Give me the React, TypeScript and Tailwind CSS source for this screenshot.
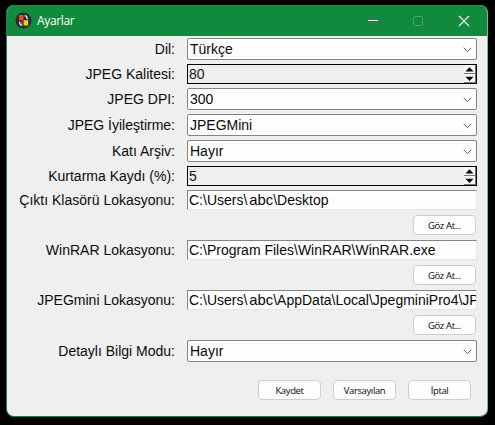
import type { ReactNode } from 'react';

const arial = "font-['Liberation_Sans',Arial,sans-serif] text-[14px] leading-none";

function Row({ label, height, children }: { label: string; height: string; children: ReactNode }) {
  return (
    <div className={`flex shrink-0 items-center ${height}`}>
      <label className={`w-[168px] shrink-0 text-right whitespace-nowrap text-[#0c0c0c] ${arial}`}>{label}</label>
      <div className="ml-3 h-full w-[290px]">{children}</div>
    </div>
  );
}

function Select({ label, value }: { label: string; value: string }) {
  return (
    <Row label={label} height="h-[22px]">
      <div className="flex h-full items-center justify-between rounded-[2px] border border-[#858585] bg-[#fefefe] pr-[4px] pl-[2px]">
        <span className={`text-[#080808] ${arial}`}>{value}</span>
        <svg className="mt-[2px]" width="9" height="6" viewBox="0 0 9 6" fill="none" stroke="#5c5c5c">
          <path d="M.7 .8 4.5 4.6 8.3 .8" />
        </svg>
      </div>
    </Row>
  );
}

function Spin({ label, value }: { label: string; value: string }) {
  return (
    <Row label={label} height="h-5">
      <div className="flex h-full items-center justify-between border border-black bg-[#efefef] pl-px">
        <span className={`text-[#151515] ${arial}`}>{value}</span>
        <svg width="12" height="18" viewBox="0 0 12 18">
          <path d="M0 0h11v8H0zM0 9h11v9H0z" fill="#f5f5f5" />
          <path d="M0 8.5h11M0 17.5h11M11.5 0v18" stroke="#777" fill="none" />
          <path d="M1.5 6.4h8L5.5 2.2zM1.5 11.8h8l-4 4.2z" fill="#050505" />
        </svg>
      </div>
    </Row>
  );
}

function Button({ children }: { children: string }) {
  return (
    <button className="flex h-5 w-[63px] shrink-0 items-center justify-center rounded-[4px] border border-[#cecece] bg-[#fdfdfd] pt-[2px] font-['Open_Sans','Noto_Sans',sans-serif] text-[9.5px] leading-none tracking-[-0.38px] text-[#080808]">
      {children}
    </button>
  );
}

function UserName() {
  return <span className="ml-[2px] text-[14.8px] leading-none">abc</span>;
}

function PathField({ label, value }: { label: string; value: ReactNode }) {
  return (
    <div className="flex flex-col gap-[5px] pb-px">
      <Row label={label} height="h-5">
        <div className="flex h-full w-[290px] items-center overflow-hidden border border-t-[#858585] border-r-[#e5e5e5] border-b-[#e5e5e5] border-l-[#858585] bg-[#fefefe] pl-px">
          <span className={`whitespace-nowrap text-[#080808] ${arial}`}>{value}</span>
        </div>
      </Row>
      <div className="flex justify-end pr-[11px]">
        <Button>Göz At...</Button>
      </div>
    </div>
  );
}

export default function App() {
  return (
    <div className="h-[425px] w-[495px] overflow-hidden bg-black pt-[5px] pl-[6px]">
      <main className="flex h-[412px] w-[482px] flex-col overflow-hidden rounded-[8px] border-x border-b border-[#198151] border-r-[#4bd391] bg-[#efefef]">
        <header className="flex h-[31px] shrink-0 items-center bg-[#128a3e] pl-2 text-white">
          <svg width="17" height="17" viewBox="0 0 17 17">
            <circle cx="8.5" cy="8.5" r="8" fill="#292b38" />
            <path d="M4 3h4.5v5.2H4z" fill="#e64c24" />
            <path d="M8.6 8.2h4.6v5.2H8.6z" fill="#ffc51d" />
            <path d="M9.6 3.6q2.7 .2 2.7 3.6M7.3 13.3q-2.7-.2-2.7-3.6" fill="none" stroke="#e2e2e4" strokeWidth="1.4" />
            <path d="M5.8 9.4h1.8v2.6H5.8z" fill="#c5402f" />
          </svg>
          <h1 className="ml-[5px] font-['Open_Sans','Noto_Sans',sans-serif] text-[12px] leading-none tracking-[-0.35px]">Ayarlar</h1>
          <svg className="ml-auto mr-[17px]" width="103" height="12" viewBox="0 0 103 12" fill="none">
            <path d="M1 5.5h10" stroke="#fff" />
            <rect x="46.5" y="1.5" width="9" height="9" rx="1" stroke="#3fa663" />
            <path d="m92 1 10 10m0-10L92 11" stroke="#f3faf5" strokeWidth="1.1" />
          </svg>
        </header>
        <section className="flex flex-col gap-1 pt-[2px]">
          <Select label="Dil:" value="Türkçe" />
          <Spin label="JPEG Kalitesi:" value="80" />
          <Select label="JPEG DPI:" value="300" />
          <Select label="JPEG İyileştirme:" value="JPEGMini" />
          <Select label="Katı Arşiv:" value="Hayır" />
          <Spin label="Kurtarma Kaydı (%):" value="5" />
          <PathField label="Çıktı Klasörü Lokasyonu:" value={<>C:\Users\<UserName />\Desktop</>} />
          <PathField label="WinRAR Lokasyonu:" value="C:\Program Files\WinRAR\WinRAR.exe" />
          <PathField label="JPEGmini Lokasyonu:" value={<>C:\Users\<UserName />\AppData\Local\JpegminiPro4\JP</>} />
          <Select label="Detaylı Bilgi Modu:" value="Hayır" />
        </section>
        <footer className="mt-[18px] flex justify-end gap-3 pr-4">
          <Button>Kaydet</Button>
          <Button>Varsayılan</Button>
          <Button>İptal</Button>
        </footer>
      </main>
    </div>
  );
}
